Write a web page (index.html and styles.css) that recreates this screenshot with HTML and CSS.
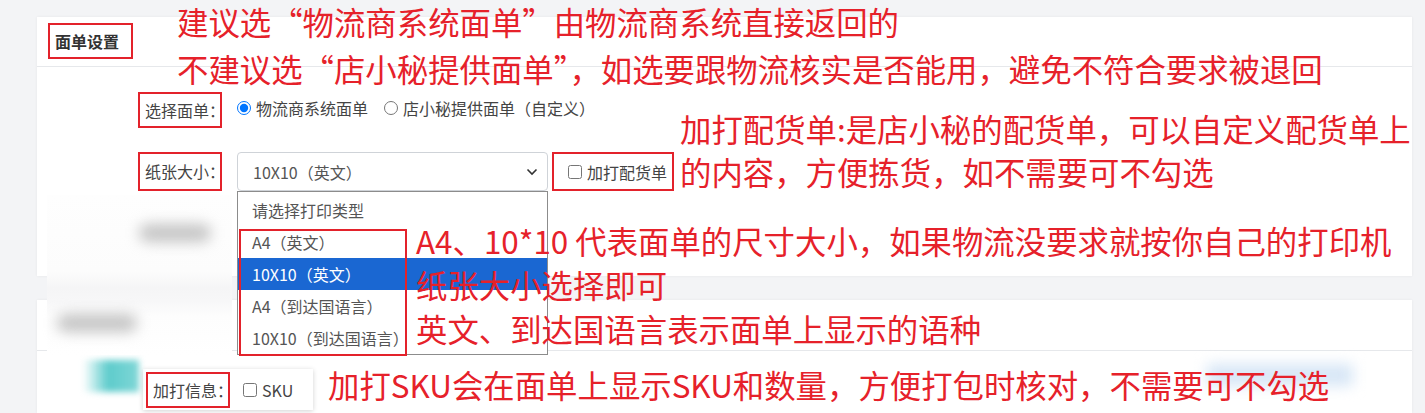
FILE: index.html
```html
<!DOCTYPE html>
<html lang="zh-CN">
<head>
  <meta charset="UTF-8">
  <meta name="viewport" content="width=device-width, initial-scale=1.0">
  <title>面单设置</title>
  <link rel="stylesheet" href="styles.css">
</head>
<body>
  <div class="page">
    <section class="card card-print">
      <div class="card-head">
        <span class="card-title mark">面单设置</span>
      </div>
      <div class="card-body">
        <div class="form-row row-type">
          <span class="form-label mark">选择面单：</span>
          <label class="radio"><input type="radio" name="printType" checked>物流商系统面单</label>
          <label class="radio"><input type="radio" name="printType">店小秘提供面单（自定义）</label>
        </div>
        <div class="form-row row-paper">
          <span class="form-label mark">纸张大小：</span>
          <div class="select-wrap">
            <div class="select">
              <span>10X10（英文）</span>
              <svg class="chevron" width="12" height="8" viewBox="0 0 12 8"><path d="M1.5 1.5l4.5 4.5 4.5-4.5" fill="none" stroke="#333" stroke-width="1.6"/></svg>
            </div>
            <ul class="options">
              <li class="option option-first">请选择打印类型</li>
              <li class="option">A4（英文）</li>
              <li class="option option-active">10X10（英文）</li>
              <li class="option">A4（到达国语言）</li>
              <li class="option">10X10（到达国语言）</li>
              <li class="options-mark"></li>
            </ul>
          </div>
          <label class="check check-pick mark"><input type="checkbox">加打配货单</label>
        </div>
      </div>
    </section>

    <section class="card card-info">
      <div class="card-head"></div>
      <div class="card-body info-body">
        <div class="blob-teal"></div>
        <div class="snip">
          <span class="form-label mark">加打信息：</span>
          <label class="check"><input type="checkbox">SKU</label>
        </div>
        <div class="blob-blue"></div>
      </div>
    </section>

    <div class="blur-patch">
      <div class="blur-text blur-row"></div>
      <div class="blur-text blur-title"></div>
    </div>

    <div class="note note-type">建议选“物流商系统面单”由物流商系统直接返回的<br>不建议选“店小秘提供面单”，如选要跟物流核实是否能用，避免不符合要求被退回</div>
    <div class="note note-pick">加打配货单:是店小秘的配货单，可以自定义配货单上<br>的内容，方便拣货，如不需要可不勾选</div>
    <div class="note note-size">A4、10*10 代表面单的尺寸大小，如果物流没要求就按你自己的打印机<br>纸张大小选择即可<br>英文、到达国语言表示面单上显示的语种</div>
    <div class="note note-sku">加打SKU会在面单上显示SKU和数量，方便打包时核对，不需要可不勾选</div>
  </div>
</body>
</html>
```

FILE: styles.css
```css
body {
  margin: 0;
  background-color: #f3f4f6;
  font-family: "Noto Sans CJK SC", "Liberation Sans", sans-serif;
  font-size: 16px;
  color: #555;
  overflow: hidden;
}
.page {
  position: relative;
  padding: 17px 0 0 37px;
  height: 413px;
  box-sizing: border-box;
  overflow: hidden;
}
.mark {
  border: 2px solid #e3222b;
  box-sizing: border-box;
}
.card {
  width: 1375px;
  background: white;
  box-shadow: 0 0 3px rgba(0,0,0,0.06);
}
.card-head {
  height: 50px;
  border-bottom: 1px solid #e6e8eb;
  box-sizing: border-box;
  padding: 6px 0 0 11px;
}
.card-title {
  display: inline-block;
  width: 85px;
  height: 36px;
  padding-left: 5px;
  line-height: 32px;
  font-weight: bold;
  color: #333;
}
.card-print {
  height: 259px;
}
.card-print .card-body {
  padding-top: 25px;
}
.form-row {
  display: flex;
  align-items: center;
}
.row-type {
  height: 36px;
}
.row-paper {
  height: 39px;
  margin-top: 24px;
}
.form-label {
  display: block;
  width: 84px;
  height: 36px;
  padding-left: 5px;
  line-height: 32px;
  white-space: nowrap;
  color: #444;
  flex-shrink: 0;
  margin-left: 101px;
}
.row-paper .form-label {
  height: 39px;
  line-height: 35px;
}
.radio {
  display: flex;
  align-items: center;
  color: #444;
  margin-left: 15px;
  margin-top: -4px;
}
.radio + .radio {
  margin-left: 16px;
}
.radio input {
  width: 14px;
  height: 14px;
  margin: 0 5px 0 0;
}
.select-wrap {
  position: relative;
  margin-left: 15px;
}
.select {
  width: 311px;
  height: 39px;
  box-sizing: border-box;
  border: 1px solid #cfd3d8;
  border-radius: 4px;
  padding: 0 9px 0 15px;
  display: flex;
  align-items: center;
  justify-content: space-between;
  color: #555;
}
.options {
  position: absolute;
  top: 39px;
  left: 0;
  width: 311px;
  margin: 0;
  padding: 0;
  list-style: none;
  background: white;
  border: 1px solid #8c8c8c;
  box-sizing: border-box;
  z-index: 2;
}
.option {
  height: 32px;
  line-height: 32px;
  padding-left: 14px;
  color: #555;
}
.option-first {
  height: 34px;
  line-height: 36px;
}
.option-active {
  background-color: #1a67d2;
  color: white;
}
.options-mark {
  position: absolute;
  left: 1px;
  top: 37px;
  width: 168px;
  height: 127px;
  border: 2px solid #e3222b;
  box-sizing: border-box;
}
.check {
  display: flex;
  align-items: center;
  color: #444;
}
.check input {
  width: 14px;
  height: 14px;
  margin: 0 5px 0 0;
}
.check-pick {
  margin-left: 4px;
  width: 122px;
  height: 39px;
  padding-left: 14px;
}
.card-info {
  margin-top: 24px;
  height: 113px;
}
.card-info .card-head {
  height: 51px;
}
.info-body {
  display: flex;
  align-items: flex-start;
  padding-top: 9px;
}
.blob-teal {
  margin-left: 46px;
  width: 56px;
  height: 32px;
  background: linear-gradient(to right, rgba(94,204,204,0) 0%, #5ecccc 45%, #7fd6d6 100%);
  filter: blur(3px);
}
.snip {
  display: flex;
  align-items: center;
  margin: 9px 0 0 4px;
  width: 170px;
  height: 41px;
  background: white;
  box-shadow: 0 1px 5px rgba(0,0,0,0.18);
}
.snip .form-label {
  margin-left: 3px;
}
.snip .check {
  margin-left: 13px;
}
.blob-blue {
  margin: 4px 59px 0 auto;
  width: 146px;
  height: 22px;
  background: #d7e6f6;
  filter: blur(7px);
}
.blur-patch {
  position: absolute;
  left: 47px;
  top: 195px;
  width: 185px;
  height: 160px;
  background: linear-gradient(to bottom, #fefefe 0%, #fcfcfc 48%, #f5f5f6 58%, #f7f7f8 66%, #fdfdfd 76%, #ffffff 100%);
  display: flex;
  flex-direction: column;
}
.blur-text {
  height: 18px;
  background: #c4c4c4;
  border-radius: 9px;
  filter: blur(7px);
}
.blur-row {
  width: 72px;
  margin: 29px 0 0 92px;
}
.blur-title {
  width: 80px;
  margin: 72px 0 0 10px;
}
.note {
  position: absolute;
  color: #e6212a;
  font-size: 31.4px;
  white-space: nowrap;
}
.note-type {
  left: 177px;
  top: -2px;
  line-height: 47px;
}
.note-pick {
  left: 680px;
  top: 107px;
  line-height: 43px;
}
.note-size {
  left: 416px;
  top: 219px;
  line-height: 44px;
  z-index: 3;
}
.note-sku {
  left: 328px;
  top: 363px;
  line-height: 44px;
}
```
